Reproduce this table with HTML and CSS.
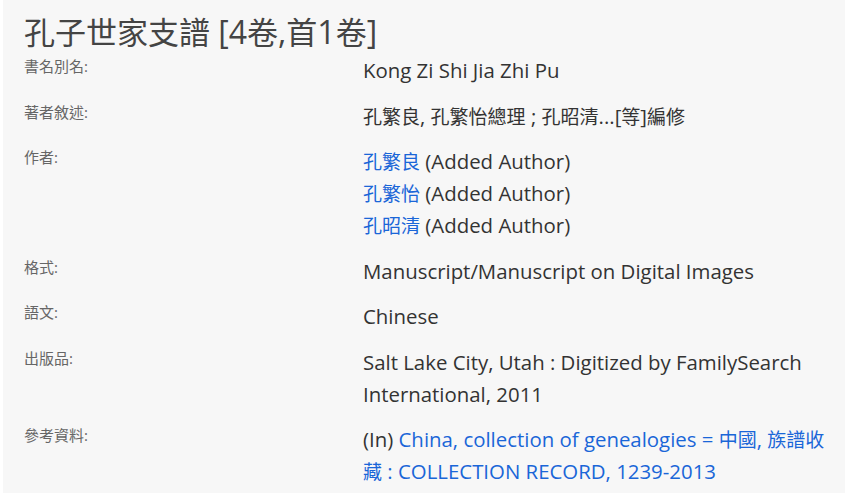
FILE: index.html
```html
<!DOCTYPE html>
<html lang="zh-Hant">
<head>
<meta charset="utf-8">
<link rel="stylesheet" href="styles.css">
</head>
<body>
<div class="panel">
  <h1 class="title"><span class="zh">孔子世家支譜</span> [4<span class="zh">卷</span>,<span class="zh">首</span>1<span class="zh">卷</span>]</h1>
  <div class="details">
    <div class="label">書名別名:</div>
    <div class="value">Kong Zi Shi Jia Zhi Pu</div>

    <div class="label">著者敘述:</div>
    <div class="value"><span class="zh">孔繁良</span>, <span class="zh">孔繁怡總理</span> ; <span class="zh">孔昭清</span>...[<span class="zh">等</span>]<span class="zh">編修</span></div>

    <div class="label">作者:</div>
    <div class="value">
      <div><a href="#" class="zh">孔繁良</a> (Added Author)</div>
      <div><a href="#" class="zh">孔繁怡</a> (Added Author)</div>
      <div><a href="#" class="zh">孔昭清</a> (Added Author)</div>
    </div>

    <div class="label">格式:</div>
    <div class="value">Manuscript/Manuscript on Digital Images</div>

    <div class="label">語文:</div>
    <div class="value">Chinese</div>

    <div class="label">出版品:</div>
    <div class="value">Salt Lake City, Utah : Digitized by FamilySearch International, 2011</div>

    <div class="label">參考資料:</div>
    <div class="value">(In) <a href="#">China, collection of genealogies = <span class="zh">中國</span>, <span class="zh">族譜收藏</span> : COLLECTION RECORD, 1239-2013</a></div>
  </div>
</div>
</body>
</html>
```

FILE: styles.css
```css
html, body {
  margin: 0;
  padding: 0;
  background: #ffffff;
}
body {
  font-family: "Open Sans", "Noto Sans CJK TC", sans-serif;
  color: #333333;
}
.panel {
  margin-left: 3px;
  height: 493px;
  background: #f7f7f7;
  padding: 14px 0 0 21px;
  box-sizing: border-box;
  overflow: hidden;
}
.title {
  margin: 0 0 4px 0;
  font-size: 32px;
  font-weight: 400;
  line-height: 36px;
  color: #444444;
}
.title .zh {
  font-size: 31px;
  line-height: 31px;
}
.details {
  display: grid;
  grid-template-columns: 339px 470px;
}
.label {
  font-size: 15px;
  line-height: 24px;
  color: #666666;
  padding-bottom: 13.5px;
}
.value {
  font-size: 20.4px;
  line-height: 32px;
  color: #333333;
  padding-bottom: 13.5px;
}
.value .zh {
  font-size: 19px;
  line-height: 19px;
}
.value a {
  color: #1a66d8;
  text-decoration: none;
}
```
